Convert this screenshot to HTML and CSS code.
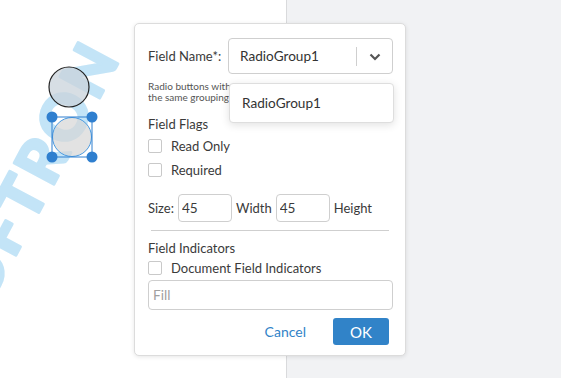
FILE: index.html
```html
<!DOCTYPE html>
<html lang="en">
<head>
  <meta charset="UTF-8" />
  <title>Radio Group Field</title>
  <link rel="stylesheet" href="styles.css">
</head>
<body>
  <div class="viewer">
    <div class="page">
      <svg class="canvas" width="286" height="378" viewBox="0 0 286 378">
        <text class="watermark" x="122" y="56" text-anchor="end" transform="rotate(-62 122 56)">PDFTRON</text>
        <circle cx="69" cy="87" r="20" fill="#c9d3db" fill-opacity="0.75" stroke="#222" stroke-width="1.2" />
        <circle cx="72" cy="137" r="19.5" fill="#d6d6d6" fill-opacity="0.7" stroke="#4a9ae0" stroke-width="1" />
        <rect x="52" y="117" width="40" height="40" fill="none" stroke="#2f7fcf" stroke-width="1" />
        <circle cx="52" cy="117" r="5.5" fill="#2f7fcf" />
        <circle cx="92" cy="117" r="5.5" fill="#2f7fcf" />
        <circle cx="52" cy="157" r="5.5" fill="#2f7fcf" />
        <circle cx="92" cy="157" r="5.5" fill="#2f7fcf" />
      </svg>
    </div>
    <div class="workspace"></div>
  </div>

  <div class="dialog">
    <div class="name-row">
      <label class="label">Field Name*:</label>
      <div class="select">
        <span class="select-value">RadioGroup1</span>
        <span class="select-sep"></span>
        <svg class="chevron" width="12" height="8" viewBox="0 0 12 8">
          <polyline points="1.5,1.5 6,6 10.5,1.5" fill="none" stroke="#555" stroke-width="2.2" />
        </svg>
      </div>
    </div>
    <div class="help">Radio buttons with the same name will belong to<br>the same grouping.</div>

    <div class="section-title flags">Field Flags</div>
    <div class="check-row"><span class="checkbox"></span><span>Read Only</span></div>
    <div class="check-row"><span class="checkbox"></span><span>Required</span></div>

    <div class="size-row">
      <span>Size:</span>
      <input class="num" type="text" value="45" />
      <span>Width</span>
      <input class="num" type="text" value="45" />
      <span>Height</span>
    </div>

    <div class="divider"></div>

    <div class="section-title indicators">Field Indicators</div>
    <div class="check-row"><span class="checkbox"></span><span>Document Field Indicators</span></div>
    <input class="fill" type="text" placeholder="Fill" />

    <div class="actions">
      <button class="cancel">Cancel</button>
      <button class="ok">OK</button>
    </div>

    <div class="menu">
      <div class="menu-item">RadioGroup1</div>
    </div>
  </div>
</body>
</html>
```

FILE: styles.css
```css
body {
  margin: 0;
  font-family: 'Lato', 'Open Sans', sans-serif;
  color: #3a3a3a;
  overflow: hidden;
}
.viewer {
  display: flex;
  height: 378px;
}
.page {
  width: 286px;
  background: #fff;
  border-right: 1px solid #d9dadc;
  overflow: hidden;
}
.canvas {
  display: block;
}
.watermark {
  font-family: 'Lato', sans-serif;
  font-weight: 900;
  font-size: 62px;
  letter-spacing: 4px;
  fill: #c3e4f7;
  stroke: #c3e4f7;
  stroke-width: 3px;
  stroke-linejoin: round;
}
.workspace {
  flex: 1;
  background: #f1f2f4;
}
.dialog {
  position: absolute;
  left: 134px;
  top: 23px;
  width: 245px;
  padding: 14px 12px 10px 13px;
  background: #fff;
  border: 1px solid #dcdcdc;
  border-radius: 5px;
  box-shadow: 0 1px 4px rgba(0, 0, 0, 0.1);
  font-size: 13px;
}
.name-row {
  display: flex;
  align-items: center;
  justify-content: space-between;
}
.select {
  width: 163px;
  height: 34px;
  border: 1px solid #cfcfcf;
  border-radius: 4px;
  display: flex;
  align-items: center;
}
.select-value {
  flex: 1;
  padding-left: 11px;
  font-size: 13.6px;
  color: #333;
}
.select-sep {
  width: 1px;
  height: 19px;
  background: #cfcfcf;
}
.chevron {
  margin: 1px 11px 0 12px;
}
.help {
  margin-top: 7px;
  font-size: 10px;
  line-height: 11px;
  color: #555;
  white-space: nowrap;
  overflow: hidden;
}
.section-title {
  height: 20px;
  line-height: 20px;
}
.flags {
  margin-top: 11px;
}
.indicators {
  margin-bottom: -2px;
}
.check-row {
  display: flex;
  align-items: center;
  gap: 9px;
  height: 24px;
}
.checkbox {
  width: 12px;
  height: 12px;
  border: 1px solid #c9c9c9;
  border-radius: 2px;
}
.size-row {
  display: flex;
  align-items: center;
  gap: 4px;
  margin-top: 12px;
}
.num {
  width: 46px;
  height: 20px;
  padding: 3px 3px;
  border: 1px solid #cfcfcf;
  border-radius: 4px;
  font-family: inherit;
  font-size: 13.6px;
  color: #3a3a3a;
}
.divider {
  height: 1px;
  background: #cfcfcf;
  margin: 8px 4px 7px 3px;
}
.fill {
  display: block;
  box-sizing: border-box;
  width: 245px;
  height: 30px;
  padding: 0 4px;
  border: 1px solid #cfcfcf;
  border-radius: 4px;
  font-family: inherit;
  font-size: 13.6px;
}
.fill::placeholder {
  color: #a0a0a0;
}
.actions {
  display: flex;
  justify-content: flex-end;
  align-items: center;
  gap: 27px;
  margin-top: 8px;
  padding-right: 4px;
}
.cancel {
  background: none;
  border: none;
  padding: 0;
  font-family: inherit;
  font-size: 14px;
  color: #3183c8;
  cursor: pointer;
}
.ok {
  width: 56px;
  height: 27px;
  background: #3183c8;
  border: none;
  border-radius: 3px;
  color: #fff;
  font-family: inherit;
  font-size: 15px;
  cursor: pointer;
}
.menu {
  position: absolute;
  left: 94px;
  top: 59px;
  width: 163px;
  height: 38px;
  background: #fff;
  border: 1px solid #dedede;
  border-radius: 4px;
  box-shadow: 0 2px 8px rgba(0, 0, 0, 0.12);
  display: flex;
  align-items: center;
}
.menu-item {
  padding-left: 12px;
  font-size: 13.6px;
  color: #333;
}
```
